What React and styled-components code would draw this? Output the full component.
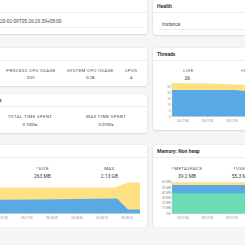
import React from 'react';
import styled, { createGlobalStyle } from 'styled-components';

const Global = createGlobalStyle`
  html, body { margin: 0; padding: 0; overflow: hidden; background: #f5f5f5; }
  body { font-family: Roboto, "Liberation Sans", Arial, sans-serif; color: #4a4a4a; }
`;

const YELLOW = '#fee183';
const BLUE = '#5aa9e4';
const GREEN = '#6cdcb6';

const Page = styled.main`
  display: grid;
  grid-template-columns: 210px 210px;
  column-gap: 6px;
  row-gap: 12.5px;
  align-items: start;
  margin-left: -63px;
`;

const Stack = styled.div`
  display: flex;
  flex-direction: column;
  gap: 7.5px;
`;

const Card = styled.section`
  background: #fff;
  border-radius: 3px;
  box-shadow: 0 1px 2px rgba(10, 10, 10, 0.09), 0 0 0 0.5px rgba(10, 10, 10, 0.06);
`;

const CardHeader = styled.header`
  height: 12px;
  border-bottom: 1px solid #ededed;
  display: flex;
  align-items: center;
  padding: 0 4px;
  font-size: 5px;
  font-weight: 700;
  color: #363636;
  white-space: nowrap;
`;

const MetaBody = styled.div`
  padding: 3px 4px 6px;
`;

const KVRow = styled.div`
  display: grid;
  grid-template-columns: 53.6px 1fr;
  padding: 3px 0 2px;
  border-bottom: 1px solid #ededed;
  font-size: 4.8px;
  line-height: 6px;
  white-space: nowrap;
`;

const HealthBody = styled.div`
  padding: 6px 4px 5px 5px;
`;

const HealthRow = styled.div`
  display: flex;
  justify-content: space-between;
  padding: 3px 4px 1px;
  border-bottom: 1px solid #ededed;
  font-size: 4.8px;
  line-height: 6px;
`;

const Tag = styled.span`
  background: #48c774;
  color: #fff;
  border-radius: 2px;
  padding: 0 2px;
  font-size: 3.6px;
`;

const StatBody = styled.div`
  padding: 7.25px 4px 5px;
`;

const ChartBody = styled.div`
  padding: 7.5px 4px 6px;
`;

const Level = styled.div`
  display: flex;
`;

const LevelItem = styled.div`
  flex: 1 0 auto;
  display: flex;
  flex-direction: column;
  align-items: center;
`;

const Heading = styled.div`
  display: flex;
  align-items: center;
  font-size: 4.3px;
  line-height: 5px;
  letter-spacing: 0.4px;
  text-transform: uppercase;
  color: #4a4a4a;
  white-space: nowrap;
`;

const Swatch = styled.span`
  width: 1.7px;
  height: 1.7px;
  margin-right: 0.8px;
  background: ${(p) => p.$color};
`;

const Value = styled.div`
  margin-top: ${(p) => p.$gap}px;
  font-size: ${(p) => p.$size}px;
  line-height: 6px;
  color: #363636;
  white-space: nowrap;
`;

const ChartSvg = styled.svg`
  display: block;
  width: 202px;
  height: 42.5px;
  text {
    font-family: Roboto, "Liberation Sans", Arial, sans-serif;
    fill: #8a8a8a;
  }
`;

function Stat({ label, value, color, size = 4.2, gap = 2.5 }) {
  return (
    <LevelItem>
      <Heading>
        {color && <Swatch $color={color} />}
        {label}
      </Heading>
      <Value $size={size} $gap={gap}>{value}</Value>
    </LevelItem>
  );
}

const LEFT = 15;
const RIGHT = 199;

function Chart({ bottom, yTicks, xTicks, areas }) {
  const area = (pts) =>
    `M${LEFT},${bottom} ` + pts.map(([x, y]) => `L${x},${y}`).join(' ') + ` L${RIGHT},${bottom} Z`;
  return (
    <ChartSvg viewBox="0 0 202 42.5">
      {areas.map((a, i) => (
        <path key={i} d={area(a.points)} fill={a.color} />
      ))}
      <line x1={LEFT} x2={LEFT} y1={1} y2={bottom} stroke="#c4c4c4" strokeWidth="0.4" />
      <line x1={LEFT} x2={RIGHT} y1={bottom} y2={bottom} stroke="#c4c4c4" strokeWidth="0.4" />
      {yTicks.map(([label, y]) => (
        <g key={label}>
          <line x1={LEFT - 1} x2={LEFT} y1={y} y2={y} stroke="#c4c4c4" strokeWidth="0.4" />
          <text x={LEFT - 1.5} y={y + 1} fontSize="3" textAnchor="end">{label}</text>
        </g>
      ))}
      {xTicks.map(([label, x]) => (
        <g key={label}>
          <line x1={x} x2={x} y1={bottom} y2={bottom + 1.2} stroke="#c4c4c4" strokeWidth="0.4" />
          <text x={x} y={bottom + 5} fontSize="3" textAnchor="middle">{label}</text>
        </g>
      ))}
    </ChartSvg>
  );
}

const times = ['05:27:45', '05:27:50', '05:27:55', '05:28:00', '05:28:05', '05:28:10', '05:28:15'];
const rightTicks = times.map((t, i) => [t, 26 + i * 24.5]).filter(([, x]) => x < RIGHT);
const heapTicks = times.map((t, i) => [t, 36 + i * 25]).filter(([, x]) => x < RIGHT);

const threadY = (v) => 35.5 - 1.2 * v;
const nonHeapY = (mb) => 34.5 - 0.517 * mb;

export default function App() {
  return (
    <>
      <Global />
      <Page>
        <Card>
          <CardHeader>Metadata</CardHeader>
          <MetaBody>
            <KVRow>
              <span>startup</span>
              <span>2020-02-09T05:26:29.39+08:00</span>
            </KVRow>
          </MetaBody>
        </Card>

        <Card>
          <CardHeader>Health</CardHeader>
          <HealthBody>
            <HealthRow>
              <span>Instance</span>
              <Tag>UP</Tag>
            </HealthRow>
          </HealthBody>
        </Card>

        <Stack>
          <Card>
            <CardHeader>Process</CardHeader>
            <StatBody>
              <Level>
                <Stat label="PID" value="19140" />
                <Stat label="Uptime" value="0d 0h 1m 48s" />
                <Stat label="Process CPU usage" value="0.01" />
                <Stat label="System CPU usage" value="0.28" />
                <Stat label="CPUs" value="4" />
              </Level>
            </StatBody>
          </Card>
          <Card>
            <CardHeader>Garbage Collection Pauses</CardHeader>
            <StatBody>
              <Level>
                <Stat label="Count" value="2" />
                <Stat label="Total time spent" value="0.1000s" />
                <Stat label="Max time spent" value="0.0700s" />
              </Level>
            </StatBody>
          </Card>
        </Stack>

        <Card>
          <CardHeader>Threads</CardHeader>
          <ChartBody>
            <Level>
              <Stat label="Live" value="26" color={YELLOW} size={4.9} gap={2} />
              <Stat label="Daemon" value="22" color={BLUE} size={4.9} gap={2} />
              <Stat label="Peak live" value="28" size={4.9} gap={2} />
            </Level>
            <Chart
              bottom={35.5}
              yTicks={[0, 5, 10, 15, 20, 25].map((v) => [String(v), threadY(v)])}
              xTicks={rightTicks}
              areas={[
                { color: YELLOW, points: [[15, threadY(28)], [45, threadY(27.8)], [65, threadY(27.2)], [85, threadY(26.4)], [105, threadY(26)], [199, threadY(26)]] },
                { color: BLUE, points: [[15, threadY(22)], [78, threadY(22)], [92, threadY(21)], [199, threadY(21)]] },
              ]}
            />
          </ChartBody>
        </Card>

        <Card>
          <CardHeader>Memory: Heap</CardHeader>
          <ChartBody>
            <Level>
              <Stat label="Used" value="48.9 MB" color={BLUE} size={4.9} gap={2} />
              <Stat label="Size" value="263 MB" color={YELLOW} size={4.9} gap={2} />
              <Stat label="Max" value="2.13 GB" size={4.9} gap={2} />
            </Level>
            <Chart
              bottom={34.5}
              yTicks={[['0 B', 34.5], ['100 MB', 24.6], ['200 MB', 14.7], ['300 MB', 4.8]]}
              xTicks={heapTicks}
              areas={[
                { color: YELLOW, points: [[15, 8.5], [174, 8.5], [187, 3.5], [199, 3.5]] },
                { color: BLUE, points: [[15, 21.2], [100, 20.4], [176, 19.6], [187, 30.5], [199, 30.5]] },
              ]}
            />
          </ChartBody>
        </Card>

        <Card>
          <CardHeader>Memory: Non heap</CardHeader>
          <ChartBody>
            <Level>
              <Stat label="Metaspace" value="39.2 MB" color={GREEN} size={4.9} gap={2} />
              <Stat label="Used" value="55.3 MB" color={BLUE} size={4.9} gap={2} />
              <Stat label="Size" value="60.4 MB" color={YELLOW} size={4.9} gap={2} />
              <Stat label="Max" value="1.27 GB" size={4.9} gap={2} />
            </Level>
            <Chart
              bottom={34.5}
              yTicks={[0, 10, 20, 30, 40, 50, 60].map((v) => [v === 0 ? '0 B' : `${v} MB`, nonHeapY(v)])}
              xTicks={rightTicks}
              areas={[
                { color: YELLOW, points: [[15, nonHeapY(60.4)], [199, nonHeapY(60.4)]] },
                { color: BLUE, points: [[15, nonHeapY(55)], [199, nonHeapY(55.3)]] },
                { color: GREEN, points: [[15, nonHeapY(39)], [199, nonHeapY(39.2)]] },
              ]}
            />
          </ChartBody>
        </Card>
      </Page>
    </>
  );
}
